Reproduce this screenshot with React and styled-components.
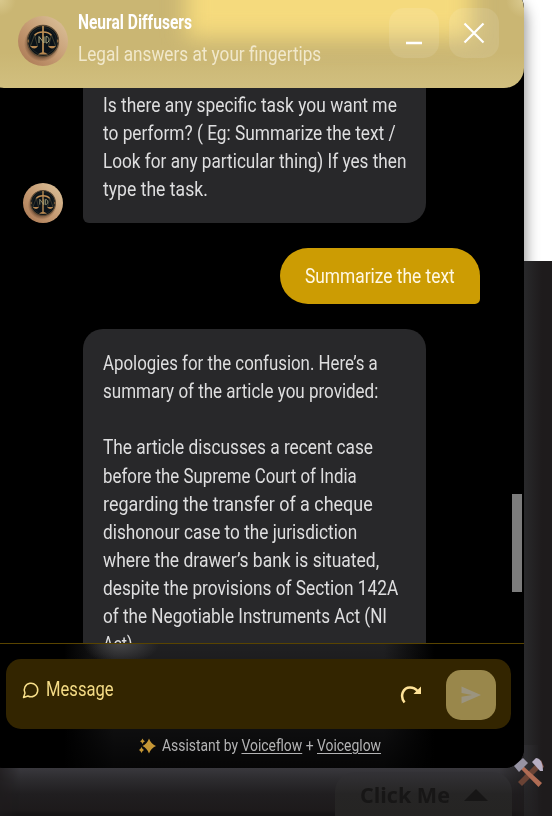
import React, { useLayoutEffect, useRef } from "react";
import styled, { createGlobalStyle, css } from "styled-components";

const Global = createGlobalStyle`
  *{box-sizing:border-box}
  html,body{margin:0;padding:0;overflow:hidden;background:#1e1b1c}
`;

const Page = styled.div`
  position: relative; width: 552px; height: 816px; overflow: hidden;
  background: linear-gradient(#fff 0 261px, #1e1b1c 261px);
  font-family: Roboto, "Liberation Sans", sans-serif;
`;
const ShadowLayer = styled.div` position: absolute; left: 0; top: 0; `;
const PanelShadow = styled.div`
  width: 524px; height: 768px; border-radius: 20px;
  box-shadow: 0 0 14px 2px rgba(0,0,0,.42);
`;
const SideGlow = styled.div`
  position: absolute; left: 524px; top: 261px; width: 28px; height: 555px;
  background: linear-gradient(90deg, #29292b, #1e1b1c 18px);
`;
const UnderGlow = styled.div`
  position: absolute; left: 0; top: 745px; width: 552px; height: 71px;
  background: linear-gradient(#39383d 23px, #2d2c2f 34px, #201e20 49px, #1d1a1b 65px, #161415 69px);
  mask-image: linear-gradient(90deg, rgba(0,0,0,.3) 0, #000 20px, #000 500px, transparent 540px);
`;
const ClickMe = styled.div`
  position: absolute; left: 335px; top: 772px; width: 177px; height: 60px;
  display: flex; gap: 14px; padding: 7px 0 0 25px; align-items: flex-start;
  border-radius: 20px 20px 0 0; color: #171616;
  background: linear-gradient(#333236, #262525 22px, #242321);
  font-family: "Open Sans", sans-serif;
  svg { margin-top: 10px; }
`;
const Panel = styled.section`
  position: relative; width: 540px; height: 780px; margin: -12px 0 0 -16px;
  display: flex; flex-direction: column; overflow: hidden;
  background: #000; border-radius: 20px;
`;
const Header = styled.header`
  position: relative; z-index: 2; flex: none; height: 100px; display: flex;
  padding: 21px 25px 0 34px; border-radius: 20px; overflow: hidden;
  background:
    radial-gradient(circle at 16px 12px, rgba(240,228,180,.4), transparent 16px),
    radial-gradient(circle at 540px 12px, rgba(240,228,180,.45), transparent 18px),
    linear-gradient(180deg, transparent 65px, rgba(220,205,145,.4) 100px),
    #cab673;
`;
const Glow = styled.div`
  position: absolute; left: 202px; top: -20px; width: 286px; height: 70px;
  background: #f5da7d; filter: blur(11px);
`;
const AvatarSlot = styled.div` position: relative; padding-top: 7px; height: 60px; `;
const HeadText = styled.div`
  position: relative; flex: 1; margin-left: 10px;
  display: flex; flex-direction: column; gap: 5px; padding-top: 1px;
`;
const Buttons = styled.div` position: relative; display: flex; gap: 10px; margin-top: -1px; `;
const HeadButton = styled.button`
  width: 50px; height: 50px; border: 0; padding: 0; border-radius: 15px;
  background: rgba(255,255,255,.1); display: grid; place-items: center;
`;
const Messages = styled.main`
  flex: none; height: 555px; overflow: hidden; position: relative;
  padding: 0 44px 0 39px;
`;
const BotRow = styled.div` display: flex; align-items: flex-end; gap: 20px; `;
const Space = styled.div` width: 40px; flex: none; `;
const Bubble = styled.div`
  width: 343px; padding: 21px 20px 20px 19.5px; background: #28282a; color: #dededf;
  border-radius: ${p => p.$first ? "0 0 20px 6px" : "20px"};
  ${p => p.$first && css`padding-top: 3.5px; height: 135px;`}
`;
const UserRow = styled.div` display: flex; justify-content: flex-end; padding: 25px 0; `;
const UserBubble = styled.div`
  width: 200px; height: 56px; padding: 15px 25px; background: #cc9c03; color: #fff8e4;
  border-radius: 28px 28px 5px 28px;
`;
const Thumb = styled.div`
  position: absolute; right: 2px; top: 406px; width: 10px; height: 98px; background: #7c7c7c;
`;
const Line = styled.div`
  height: ${p => p.$h || 28.15}px; line-height: ${p => p.$h || 28.15}px;
  font-size: ${p => p.$size || 19.8}px; font-weight: ${p => p.$weight || 400};
  color: ${p => p.$color || "inherit"}; white-space: nowrap;
  span { display: inline-block; transform-origin: 0 50%; }
`;
const Footer = styled.footer`
  position: relative; flex: 1; border-top: 1px solid #594400; padding: 15px 13px 0 22px;
  background: radial-gradient(ellipse 38px 20px at 137px 0, #454547 0, transparent 100%),
    linear-gradient(180deg, transparent 0, rgba(0,0,0,.8) 122px),
    linear-gradient(90deg, #000 80px, #202022 130px, #202022 400px, #000 450px);
`;
const InputBar = styled.div`
  height: 70px; border-radius: 15px; background: #332500; display: flex;
  align-items: flex-start; padding: 11px 15px 0 16px; color: #f4db85;
`;
const BubbleIcon = styled.svg` flex: none; margin-top: 11px; `;
const RedoIcon = styled.svg` flex: none; margin-top: 14px; `;
const Placeholder = styled.div` flex: 1; margin: 6px 0 0 6px; `;
const Send = styled.button`
  width: 50px; height: 50px; border: 0; padding: 0; border-radius: 15px; margin-left: 24px;
  background: #99874b; display: grid; place-items: center;
`;
const Credit = styled.div`
  display: flex; align-items: center; height: 22px; margin: 6px 0 0 133px; color: #b3b3b4;
  > svg { margin-right: 6px; }
  u { text-underline-offset: 2px; text-decoration-thickness: 1px; }
`;
const Tools = styled.div` position: absolute; left: 514px; top: 757px; width: 31px; height: 31px; `;
const AvatarSvg = styled.svg` display: block; flex: none; `;

/* Condensed text line, set to a given width. */
function Fit({ w, children, ...rest }) {
  const ref = useRef(null);
  useLayoutEffect(() => {
    const el = ref.current;
    el.style.transform = `scaleX(${w / el.offsetWidth})`;
  }, [w]);
  return <Line {...rest} style={{ width: w }}><span ref={ref}>{children}</span></Line>;
}

function Avatar({ size, id }) {
  return (
    <AvatarSvg width={size} height={size} viewBox="0 0 50 50">
      <defs>
        <linearGradient id={id} x1="0.1" y1="0.9" x2="0.9" y2="0.1">
          <stop offset="0" stopColor="#ae7d58" /><stop offset=".5" stopColor="#c69c74" /><stop offset="1" stopColor="#d9bd95" />
        </linearGradient>
        <radialGradient id={id + "s"}><stop offset=".7" stopColor="#422718" stopOpacity=".65" /><stop offset="1" stopColor="#422718" stopOpacity="0" /></radialGradient>
      </defs>
      <circle cx="25" cy="25" r="25" fill={`url(#${id})`} />
      <circle cx="24" cy="27.5" r="18" fill={`url(#${id}s)`} />
      <circle cx="25" cy="25" r="15.5" fill="#0b1218" stroke="#5c4a34" strokeWidth="1.3" />
      <circle cx="25" cy="25" r="13.5" fill="none" stroke="#343a31" strokeWidth=".5" />
      <path d="M9 25l2-2v4zM41 25l-2-2v4z" fill="#8a663f" />
      <path d="M25 10v28" stroke="#c9985a" strokeWidth="1.6" />
      <path d="M16.5 19.5Q19 16 25 16t8.5 3.5" stroke="#c08f55" strokeWidth="1.7" fill="none" />
      <path d="M20 38.5q5-5 10 0zM12 30q4.5 5 8 0zM30 30q4 5 8 0z" fill="#b58650" />
      <path d="M16.5 19l-4 11M16.5 19l3 11M33.5 19l-3 11M33.5 19l4 11" stroke="#55513b" strokeWidth=".7" />
      <path d="M21 27v-6.5l5 6.5v-6.5M28 20.5c4 0 4 6.5 0 6.5z" stroke="#a9a67e" strokeWidth="1" fill="none" />
    </AvatarSvg>
  );
}

const task = [
  ["Is there any specific task you want me", 294],
  ["to perform? ( Eg: Summarize the text /", 293],
  ["Look for any particular thing) If yes then", 303],
  ["type the task.", 105],
];
const summary = [
  ["Apologies for the confusion. Here’s a", 275],
  ["summary of the article you provided:", 275],
  null,
  ["The article discusses a recent case", 270],
  ["before the Supreme Court of India", 254],
  ["regarding the transfer of a cheque", 270],
  ["dishonour case to the jurisdiction", 254],
  ["where the drawer’s bank is situated,", 276],
  ["despite the provisions of Section 142A", 295],
  ["of the Negotiable Instruments Act (NI", 284],
  ["Act).", 34],
];
const Lines = ({ items }) => items.map((l, i) => l ? <Fit key={i} w={l[1]}>{l[0]}</Fit> : <Line key={i} />);

export default function App() {
  return (
    <Page>
      <Global />
      <ShadowLayer><PanelShadow /></ShadowLayer>
      <SideGlow />
      <UnderGlow />
      <ClickMe>
        <Fit w={90} $h={30} $size={22} $weight={700}>Click Me</Fit>
        <svg width="24" height="12"><path d="M0 12L12 0L24 12z" fill="#171616" /></svg>
      </ClickMe>
      <Panel>
        <Header>
          <Glow />
          <AvatarSlot><Avatar size={50} id="head" /></AvatarSlot>
          <HeadText>
            <Fit w={114} $h={26} $weight={700} $color="#fff">Neural Diffusers</Fit>
            <Fit w={243} $h={28} $color="#f1e8cb">Legal answers at your fingertips</Fit>
          </HeadText>
          <Buttons>
            <HeadButton><svg width="50" height="50"><path d="M17 35h16" stroke="#fff" strokeWidth="2.3" /></svg></HeadButton>
            <HeadButton><svg width="50" height="50"><path d="M15.5 15.5l19 19m0-19l-19 19" stroke="#fff" strokeWidth="2.2" /></svg></HeadButton>
          </Buttons>
        </Header>
        <Messages>
          <BotRow>
            <Avatar size={40} id="chat" />
            <Bubble $first><Lines items={task} /></Bubble>
          </BotRow>
          <UserRow><UserBubble><Fit w={150}>Summarize the text</Fit></UserBubble></UserRow>
          <BotRow><Space /><Bubble><Lines items={summary} /></Bubble></BotRow>
          <Thumb />
        </Messages>
        <Footer>
          <InputBar>
            <BubbleIcon width="18" height="18" viewBox="0 0 24 24" fill="none" stroke="#f8df8a" strokeWidth="2" strokeLinejoin="round" strokeLinecap="round"><path d="M7.9 20A9 9 0 1 0 4 16.1L2 22Z" /></BubbleIcon>
            <Placeholder><Fit w={68}>Message</Fit></Placeholder>
            <RedoIcon width="22" height="20" viewBox="0 0 22 20">
              <path d="M4.5 18.5C-.5 12 3 3.500 10 3.500c3.500 0 5.500 1 7.500 3.500" fill="none" stroke="#ffe398" strokeWidth="2.500" />
              <path d="M21 2.500v7.500h-7.500z" fill="#ffe398" />
            </RedoIcon>
            <Send><svg width="50" height="50"><path d="M15.5 16.5L35 25L15.5 33.5V26.8L26 25L15.5 23z" fill="#9b947f" /></svg></Send>
          </InputBar>
          <Credit>
            <svg width="17" height="16" viewBox="0 0 17 16" fill="#c59635"><path d="M10 .5Q12 6 17 8Q12 10 10 15.500Q8 10 3.500 8Q8 6 10 .5zM3.500 .5Q4.200 2.500 6 3.200Q4.200 4 3.500 6Q2.800 4 1 3.200Q2.800 2.500 3.500 .5zM2.500 9Q3.200 11.200 5 12Q3.200 12.800 2.500 15Q1.800 12.800 0 12Q1.800 11.200 2.500 9z" /></svg>
            <Fit w={219} $h={22} $size={15.8}>Assistant by <u>Voiceflow</u> + <u>Voiceglow</u></Fit>
          </Credit>
        </Footer>
      </Panel>
      <Tools>
        <svg width="31" height="31" viewBox="0 0 31 31">
          <path d="M23 8L27 3L30 10L26 13z" fill="#7c4b3b" />
          <path d="M21 8l4 4L8 29l-4-4z" fill="#6a4335" />
          <path d="M8 8l20 18-3.500 4L6 11z" fill="#b06c54" />
          <path d="M0 9L9 1L14 6L5 15z" fill="#9693a2" />
          <path d="M18 5L22 1Q29 2 29 14L26 14z" fill="#b7aec2" />
        </svg>
      </Tools>
    </Page>
  );
}
